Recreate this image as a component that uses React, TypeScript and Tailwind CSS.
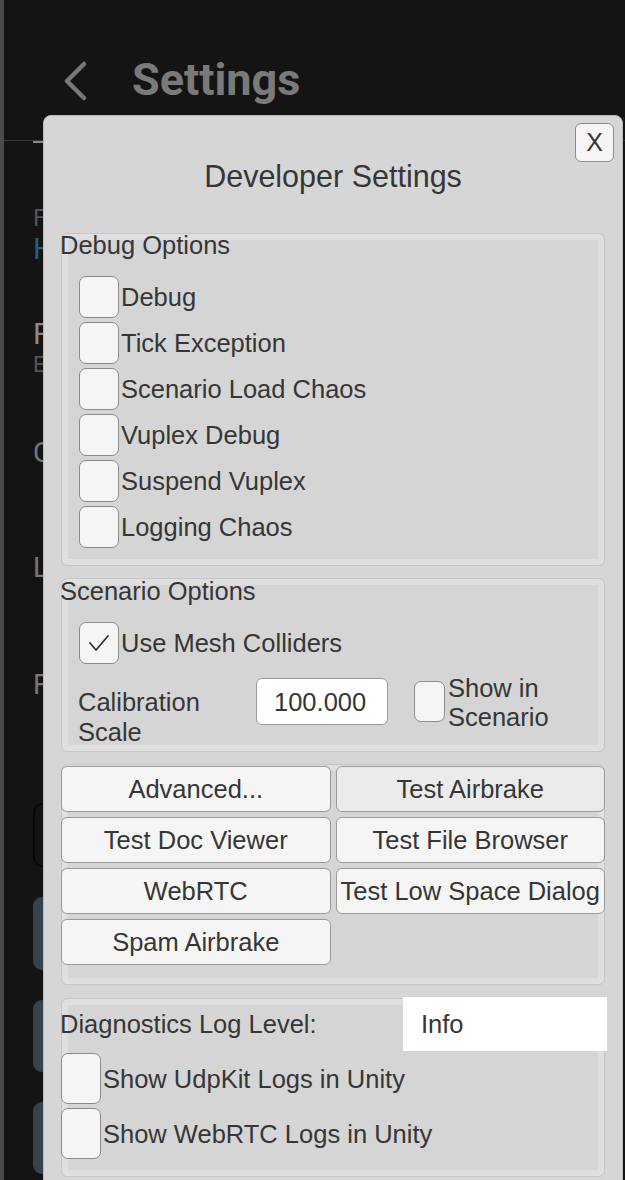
import React from "react";

function Check({ className = "", checked = false }: { className?: string; checked?: boolean }) {
  return (
    <div
      className={
        "flex shrink-0 items-center justify-center rounded-[7px] border border-[#8c8c8c] bg-[#f5f5f5] " + className
      }
    >
      {checked && (
        <svg width="26" height="22" viewBox="0 0 26 22" fill="none">
          <path d="M4 11 L10 18 L22 4" stroke="#333" strokeWidth="1.8" strokeLinecap="round" strokeLinejoin="round" />
        </svg>
      )}
    </div>
  );
}

function Panel({ className = "", children }: { className?: string; children?: React.ReactNode }) {
  return (
    <div
      className={
        "relative rounded-[6px] border border-[#c6c6c6] bg-[#d5d5d5] shadow-[inset_0_0_0_6px_#dfdfdf] " + className
      }
    >
      {children}
    </div>
  );
}

function Btn({ label, className = "" }: { label: string; className?: string }) {
  return (
    <div
      className={
        "flex h-[46px] items-center justify-center whitespace-nowrap rounded-[6px] border border-[#9a9a9a] text-[25.5px] leading-[28px] " +
        className
      }
    >
      {label}
    </div>
  );
}

const debugRows = ["Debug", "Tick Exception", "Scenario Load Chaos", "Vuplex Debug", "Suspend Vuplex", "Logging Chaos"];

export default function App() {
  return (
    <div className="relative h-[1180px] w-[625px] overflow-hidden border-l-[4px] border-[#4b4b4b] bg-[#141414] [font-family:Roboto,sans-serif]">
      {/* background settings page */}
      <div className="flex h-[141px] items-start border-b border-[#353535] pl-[58px] pt-[60px]">
        <svg width="28" height="42" viewBox="0 0 28 42" fill="none">
          <path d="M22 4 L5 21 L22 38" stroke="#777" strokeWidth="4.5" strokeLinecap="round" strokeLinejoin="round" />
        </svg>
        <div className="ml-[42px] -mt-[6px] text-[45px] font-bold leading-[52px] text-[#7a7a7a]">Settings</div>
      </div>
      <div className="pl-[29px]">
        <div className="h-[2px] w-[12px] bg-[#8a8a8a]" />
        <div className="mt-[63px] text-[24px] leading-[24px] text-[#555]">F</div>
        <div className="mt-[4px] text-[30px] leading-[30px] text-[#1f5e87]">H</div>
        <div className="mt-[55px] text-[30px] leading-[30px] text-[#8a8a8a]">F</div>
        <div className="mt-[5px] text-[22px] leading-[22px] text-[#555]">E</div>
        <div className="mt-[62px] text-[28px] leading-[29px] text-[#777]">C</div>
        <div className="mt-[86px] text-[28px] leading-[29px] text-[#777]">L</div>
        <div className="mt-[88px] text-[28px] leading-[29px] text-[#777]">F</div>
        <div className="mt-[104px] h-[64px] w-[400px] rounded-[9px] border-2 border-[#070707]" />
        <div className="mt-[30px] h-[73px] w-[400px] rounded-[9px] bg-[#35434c]" />
        <div className="mt-[30px] h-[72px] w-[400px] rounded-[9px] bg-[#35434c]" />
        <div className="mt-[30px] h-[72px] w-[400px] rounded-[9px] bg-[#35434c]" />
      </div>

      {/* developer settings dialog */}
      <div className="absolute left-[39px] top-[115px] h-[1100px] w-[580px] rounded-[8px] border border-[#bcbcbc] bg-[#d6d6d6] px-[17px] text-[25.5px] text-[#363636] [font-family:'Liberation_Sans',Arial,sans-serif]">
        <div className="absolute right-[8px] top-[7px] flex h-[39px] w-[39px] items-center justify-center rounded-[6px] border border-[#8c8c8c] bg-[#f5f5f5] text-[25px] leading-none">
          X
        </div>
        <div className="pt-[42px] text-center text-[30.5px] leading-[36px]">Developer Settings</div>

        {/* Debug Options */}
        <Panel className="mt-[39px] h-[333px]">
          <div className="-ml-[2px] -mt-[3px] leading-[28px]">Debug Options</div>
          <div className="mt-[17px] flex flex-col gap-[4px] pl-[17px]">
            {debugRows.map((r) => (
              <div key={r} className="flex h-[42px] items-center">
                <Check className="h-[42px] w-[40px]" />
                <span className="ml-[2px] leading-[28px]">{r}</span>
              </div>
            ))}
          </div>
        </Panel>

        {/* Scenario Options */}
        <Panel className="mt-[12px] h-[174px]">
          <div className="-ml-[2px] -mt-[2px] leading-[28px]">Scenario Options</div>
          <div className="mt-[17px] flex h-[42px] items-center pl-[17px]">
            <Check checked className="h-[42px] w-[40px]" />
            <span className="ml-[2px] leading-[28px]">Use Mesh Colliders</span>
          </div>
          <div className="mt-[8px] flex items-start pl-[16px]">
            <div className="mt-[15px] w-[178px] leading-[30px]">
              Calibration
              <br />
              Scale
            </div>
            <div className="mt-[6px] flex h-[47px] w-[132px] items-center rounded-[6px] border border-[#9a9a9a] bg-white pl-[17px] leading-[28px]">
              100.000
            </div>
            <Check className="ml-[26px] mt-[9px] h-[41px] w-[31px]" />
            <div className="ml-[3px] mt-[2px] leading-[29px]">
              Show in
              <br />
              Scenario
            </div>
          </div>
        </Panel>

        {/* Buttons */}
        <Panel className="mt-[12px] h-[221px]">
          <div className="-mx-px grid grid-cols-2 gap-[5px] pt-[1px]">
            <Btn label="Advanced..." className="bg-[#f5f5f5]" />
            <Btn label="Test Airbrake" className="bg-[#ebebeb]" />
            <Btn label="Test Doc Viewer" className="bg-[#f5f5f5]" />
            <Btn label="Test File Browser" className="bg-[#f5f5f5]" />
            <Btn label="WebRTC" className="bg-[#f5f5f5]" />
            <Btn label="Test Low Space Dialog" className="bg-[#f5f5f5]" />
            <Btn label="Spam Airbrake" className="bg-[#f5f5f5]" />
          </div>
        </Panel>

        {/* Diagnostics */}
        <Panel className="mt-[13px] h-[179px]">
          <div className="-mt-[2px] flex h-[54px] items-center justify-between">
            <span className="-ml-[2px] leading-[28px]">Diagnostics Log Level:</span>
            <div className="-mr-[3px] flex h-[54px] w-[204px] items-center bg-white pl-[18px] leading-[28px]">Info</div>
          </div>
          <div className="-ml-px mt-[2px] flex flex-col gap-[4px]">
            <div className="flex h-[51px] items-center">
              <Check className="h-[51px] w-[40px]" />
              <span className="ml-[2px] leading-[28px]">Show UdpKit Logs in Unity</span>
            </div>
            <div className="flex h-[51px] items-center">
              <Check className="h-[51px] w-[40px]" />
              <span className="ml-[2px] leading-[28px]">Show WebRTC Logs in Unity</span>
            </div>
          </div>
        </Panel>
      </div>
    </div>
  );
}
